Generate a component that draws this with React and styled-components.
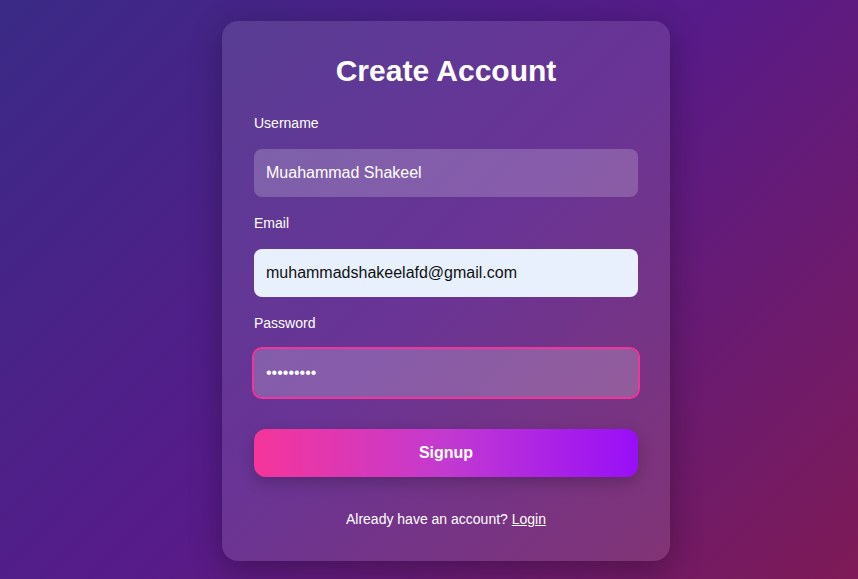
import React, { useState } from "react";
import styled, { createGlobalStyle } from "styled-components";

const GlobalStyle = createGlobalStyle`
  * { box-sizing: border-box; }
  html, body { margin: 0; padding: 0; }
  body {
    font-family: "Liberation Sans", Arial, sans-serif;
    background: linear-gradient(135deg, #3a2a86 0%, #571b89 50%, #7e1a56 100%);
    min-height: 100vh;
  }
`;

const Page = styled.div`
  min-height: 100vh;
  display: flex;
  justify-content: center;
  align-items: center;
  padding: 3px 0 0 34px;
`;

const Card = styled.form`
  width: 448px;
  padding: 33px 32px 34px;
  border-radius: 16px;
  background: rgba(255, 255, 255, 0.11);
  box-shadow: 0 8px 32px rgba(0, 0, 0, 0.3);
  color: #fff;
`;

const Title = styled.h2`
  margin: 0 0 27px;
  text-align: center;
  font-size: 30px;
  line-height: 34px;
  font-weight: 700;
`;

const Field = styled.div`
  display: flex;
  flex-direction: column;
  margin-bottom: 18px;
`;

const Label = styled.label`
  font-size: 14px;
  line-height: 16px;
  margin-bottom: 18px;
  color: #fff;
`;

const Input = styled.input`
  height: 48px;
  width: 100%;
  padding: 0 12px;
  border: none;
  border-radius: 8px;
  font-family: inherit;
  font-size: 16px;
  color: ${(p) => (p.$filled ? "#111" : "#fff")};
  background: ${(p) => (p.$filled ? "#e8f0fe" : "rgba(255, 255, 255, 0.2)")};
  outline: ${(p) => (p.$focused ? "2px solid #f0369a" : "none")};
  outline-offset: 0;
  &::placeholder { color: rgba(255, 255, 255, 0.7); }
`;

const Button = styled.button`
  display: block;
  width: 100%;
  height: 48px;
  margin-top: 32px;
  border: none;
  border-radius: 12px;
  background: linear-gradient(90deg, #f5359a 0%, #c23ad0 50%, #980ff8 100%);
  color: #fff;
  font-family: inherit;
  font-size: 16px;
  font-weight: 700;
  box-shadow: 0 5px 15px rgba(0, 0, 0, 0.22);
  cursor: pointer;
`;

const Footer = styled.p`
  margin: 34px 0 0;
  text-align: center;
  font-size: 14px;
  line-height: 16px;
  color: #fff;
  a { color: #fff; text-decoration: underline; }
`;

export default function App() {
  const [name, setName] = useState("Muahammad Shakeel");
  const [email, setEmail] = useState("muhammadshakeelafd@gmail.com");
  const [pass, setPass] = useState("123456789");

  return (
    <>
      <GlobalStyle />
      <Page>
        <Card onSubmit={(e) => e.preventDefault()}>
          <Title>Create Account</Title>
          <Field>
            <Label>Username</Label>
            <Input value={name} onChange={(e) => setName(e.target.value)} />
          </Field>
          <Field>
            <Label>Email</Label>
            <Input $filled value={email} onChange={(e) => setEmail(e.target.value)} />
          </Field>
          <Field>
            <Label>Password</Label>
            <Input $focused type="password" value={pass} onChange={(e) => setPass(e.target.value)} />
          </Field>
          <Button type="submit">Signup</Button>
          <Footer>
            Already have an account? <a href="#">Login</a>
          </Footer>
        </Card>
      </Page>
    </>
  );
}
